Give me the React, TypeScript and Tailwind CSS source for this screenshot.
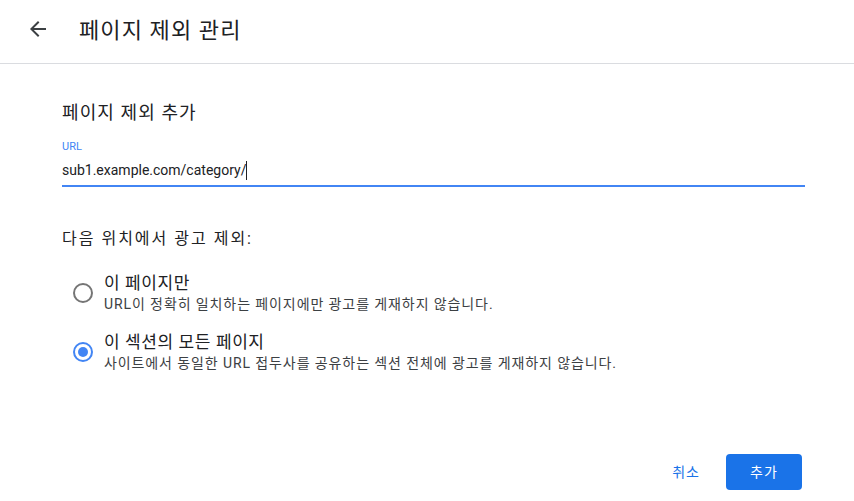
import React from "react";

const font = { fontFamily: "Roboto, 'Noto Sans CJK KR', sans-serif" };

interface RadioProps {
  checked?: boolean;
  title: string;
  desc: string;
}

const RadioOption: React.FC<RadioProps> = ({ checked, title, desc }) => (
  <div className="flex items-start">
    <div className="w-[41px] pt-[11px] flex justify-start pl-[10px]">
      {checked ? (
        <div className="w-[20px] h-[20px] rounded-full border-2 border-[#4285f4] flex items-center justify-center">
          <div className="w-[10px] h-[10px] rounded-full bg-[#4285f4]" />
        </div>
      ) : (
        <div className="w-[20px] h-[20px] rounded-full border-2 border-[#757575]" />
      )}
    </div>
    <div className="flex flex-col">
      <div className="text-[17px] leading-[22px] tracking-[0.6px] text-[#202124]">{title}</div>
      <div className="text-[14px] leading-[20px] tracking-[0.9px] text-[#3c4043]">{desc}</div>
    </div>
  </div>
);

export default function App() {
  return (
    <div className="w-[854px] h-[501px] bg-white flex flex-col" style={font}>
      <div className="h-[64px] border-b border-[#dadce0] flex items-center">
        <div className="w-[79px] flex items-center pl-[26px] pb-[5px]">
          <svg width="24" height="24" viewBox="0 0 24 24" fill="#3c4043">
            <path d="M20 11H7.83l5.59-5.59L12 4l-8 8 8 8 1.41-1.41L7.83 13H20v-2z" />
          </svg>
        </div>
        <div className="text-[22px] tracking-[1.1px] text-[#202124] pb-[2px]">페이지 제외 관리</div>
      </div>
      <div className="flex flex-col px-[62px] pr-[49px]">
        <div className="mt-[36px] text-[18px] leading-[26px] tracking-[1.1px] text-[#202124]">페이지 제외 추가</div>
        <div className="mt-[14px] text-[11px] leading-[14px] text-[#4285f4]">URL</div>
        <div className="mt-[4px] h-[29px] border-b-2 border-[#4285f4] flex items-start pt-[1px] text-[14px] text-[#202124]">
          <span className="leading-[22px]">sub1.example.com/category/</span>
          <span className="w-[1px] h-[19px] mt-[2px] bg-[#202124]" />
        </div>
        <div className="mt-[42px] text-[16px] leading-[20px] tracking-[2px] text-[#202124]">다음 위치에서 광고 제외:</div>
        <div className="mt-[23px] flex flex-col gap-[17px] ml-[1px]">
          <RadioOption title="이 페이지만" desc="URL이 정확히 일치하는 페이지에만 광고를 게재하지 않습니다." />
          <RadioOption
            checked
            title="이 섹션의 모든 페이지"
            desc="사이트에서 동일한 URL 접두사를 공유하는 섹션 전체에 광고를 게재하지 않습니다."
          />
        </div>
      </div>
      <div className="flex-1" />
      <div className="flex justify-end items-center gap-[24px] pr-[52px] pb-[11px]">
        <button className="text-[14px] tracking-[1px] text-[#1a73e8] px-[2px] h-[36px]">취소</button>
        <button className="text-[14px] tracking-[1px] text-white bg-[#1a73e8] rounded-[4px] w-[76px] h-[36px]">추가</button>
      </div>
    </div>
  );
}
